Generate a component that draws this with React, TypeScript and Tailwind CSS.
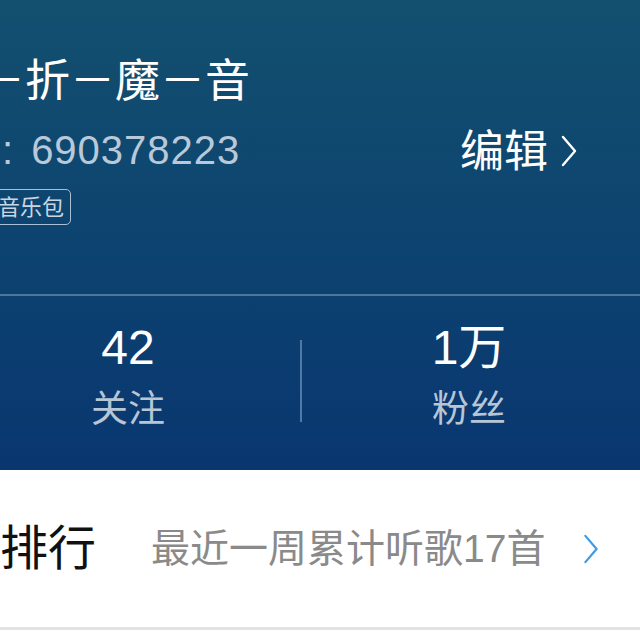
// Profile header (cropped mobile view)
const cjk = { fontFamily: '"Liberation Sans", "Noto Sans CJK SC", sans-serif' };

function Chevron({ className }: { className?: string }) {
  return (
    <svg className={className} viewBox="0 0 16 32" fill="none" stroke="currentColor" strokeWidth={2.4} strokeLinecap="round" strokeLinejoin="round">
      <path d="M2 2 L14 16 L2 30" />
    </svg>
  );
}

export default function App() {
  return (
    <div className="w-[640px] h-[640px] overflow-hidden bg-white" style={cjk}>
      {/* Header */}
      <div className="h-[470px] bg-gradient-to-b from-[#13506f] to-[#0a3670] flex flex-col">
        <div className="flex justify-between pt-[54px] h-[294px]">
          <div className="flex flex-col">
            <div className="text-[45px] leading-[56px] text-white ml-[-20px] whitespace-nowrap">－折－魔－音</div>
            <div className="text-[40px] leading-[48px] text-[#b9c9d9] ml-[-40px] mt-[16px] tracking-[1px] whitespace-nowrap">
              ID:<span className="ml-[17px]">690378223</span>
            </div>
            <div className="mt-[15px] ml-[-9px] self-start border border-[#a9bfd3] rounded-[5px] px-[6px] h-[36px] flex items-center text-[22px] text-[#c9d6e2] whitespace-nowrap">
              音乐包
            </div>
          </div>
          <div className="flex items-start pt-[73px] pr-[62px] text-white">
            <span className="text-[44px] leading-[50px]">编辑</span>
            <Chevron className="w-[18px] h-[32px] ml-[12px] mt-[8px]" />
          </div>
        </div>
        <div className="h-[2px] bg-[#5a84a6]/80" />
        <div className="flex flex-1 ml-[-44px] items-start">
          <div className="w-[344px] flex flex-col items-center pt-[24px]">
            <span className="text-[48px] leading-[56px] text-white">42</span>
            <span className="text-[37px] leading-[48px] text-[#b7c6d6] mt-[10px]">关注</span>
          </div>
          <div className="w-[2px] h-[82px] mt-[44px] bg-[#4f7aa6]" />
          <div className="w-[334px] flex flex-col items-center pt-[24px]">
            <span className="text-[48px] leading-[56px] text-white">1万</span>
            <span className="text-[37px] leading-[48px] text-[#b7c6d6] mt-[10px]">粉丝</span>
          </div>
        </div>
      </div>

      {/* Ranking row */}
      <div className="h-[157px] flex items-center">
        <span className="text-[48px] leading-[56px] text-[#111] whitespace-nowrap">排行</span>
        <span className="text-[39px] leading-[48px] text-[#8a8a8a] ml-[55px] whitespace-nowrap">最近一周累计听歌17首</span>
        <Chevron className="w-[16px] h-[30px] ml-[38px] text-[#3f9be6]" />
      </div>
      <div className="h-[3px] bg-[#e2e2e2]" />
    </div>
  );
}
